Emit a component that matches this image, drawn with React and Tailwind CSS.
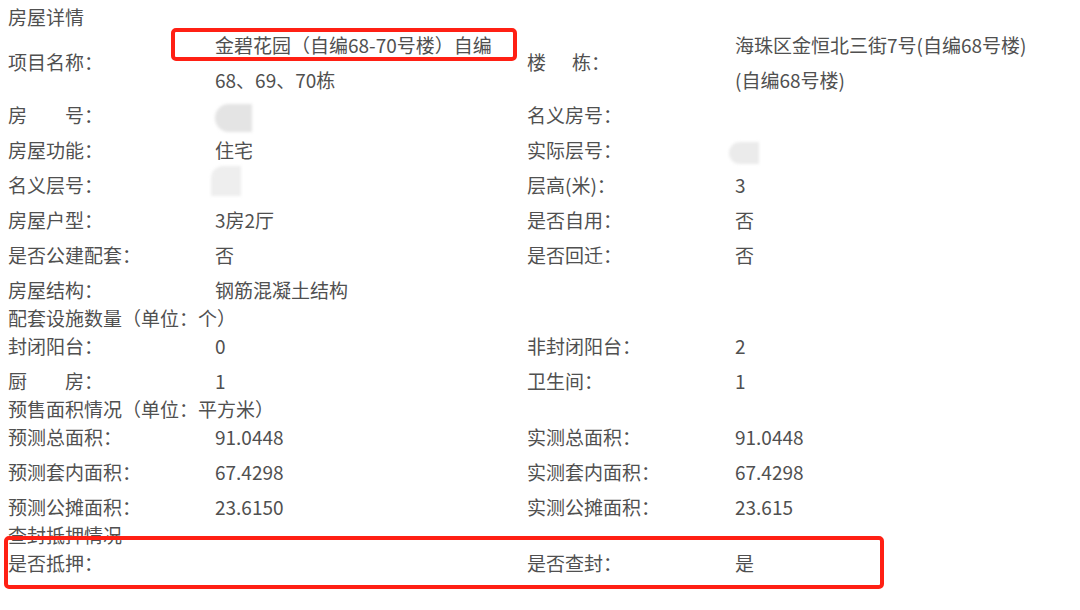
import React from "react";

const font = { fontFamily: '"Noto Sans CJK SC", "Microsoft YaHei", sans-serif' };

function Smudge({ className }) {
    return <span className={"inline-block align-middle blur-[1.5px] " + className} />;
}

function Row({ l1, v1, l2, v2 }) {
    return (
        <>
            <div className="pl-2 leading-[35px]">{l1}</div>
            <div className="leading-[35px]">{v1}</div>
            <div className="leading-[35px]">{l2}</div>
            <div className="leading-[35px]">{v2}</div>
        </>
    );
}

function Section({ children }) {
    return <div className="col-span-4 pl-2 leading-[21px]">{children}</div>;
}

export default function App() {
    return (
        <div className="relative w-[1080px] h-[610px] bg-white text-[19px] text-[#505050] overflow-hidden" style={font}>
            <div className="pt-[6px] grid grid-cols-[215px_312px_208px_1fr]">
                <Section>房屋详情</Section>

                {/* 项目名称 / 楼栋 */}
                <div className="pl-2 flex items-center">项目名称：</div>
                <div className="leading-[35px] whitespace-nowrap">金碧花园（自编68-70号楼）自编<br />68、69、70栋</div>
                <div className="flex items-center">楼<span className="ml-[26px]">栋：</span></div>
                <div className="leading-[35px] whitespace-nowrap">海珠区金恒北三街7号(自编68号楼)<br />(自编68号楼)</div>

                <Row
                    l1="房　　号："
                    v1={<Smudge className="w-[37px] h-[28px] bg-[#e4e4e4] rounded-l-full" />}
                    l2="名义房号："
                    v2=""
                />
                <Row
                    l1="房屋功能："
                    v1="住宅"
                    l2="实际层号："
                    v2={<Smudge className="-ml-[6px] w-[30px] h-[22px] bg-[#ebebeb] rounded-l-full" />}
                />
                <Row
                    l1="名义层号："
                    v1={<Smudge className="-ml-[4px] -mt-[14px] w-[30px] h-[30px] bg-[#eeeeee] rounded-tl-xl" />}
                    l2="层高(米)："
                    v2="3"
                />
                <Row l1="房屋户型：" v1="3房2厅" l2="是否自用：" v2="否" />
                <Row l1="是否公建配套：" v1="否" l2="是否回迁：" v2="否" />
                <Row l1="房屋结构：" v1="钢筋混凝土结构" l2="" v2="" />

                <Section>配套设施数量（单位：个）</Section>
                <Row l1="封闭阳台：" v1="0" l2="非封闭阳台：" v2="2" />
                <Row l1="厨　　房：" v1="1" l2="卫生间：" v2="1" />

                <Section>预售面积情况（单位：平方米）</Section>
                <Row l1="预测总面积：" v1="91.0448" l2="实测总面积：" v2="91.0448" />
                <Row l1="预测套内面积：" v1="67.4298" l2="实测套内面积：" v2="67.4298" />
                <Row l1="预测公摊面积：" v1="23.6150" l2="实测公摊面积：" v2="23.615" />

                <Section>查封抵押情况</Section>
                <Row l1="是否抵押：" v1="" l2="是否查封：" v2="是" />
            </div>

            {/* annotation boxes */}
            <div className="absolute left-[171px] top-[28px] w-[346px] h-[33px] border-4 border-[#ff2014] rounded-[5px]" />
            <div className="absolute left-[4px] top-[536px] w-[880px] h-[53px] border-4 border-[#ff2014] rounded-[5px]" />
        </div>
    );
}
